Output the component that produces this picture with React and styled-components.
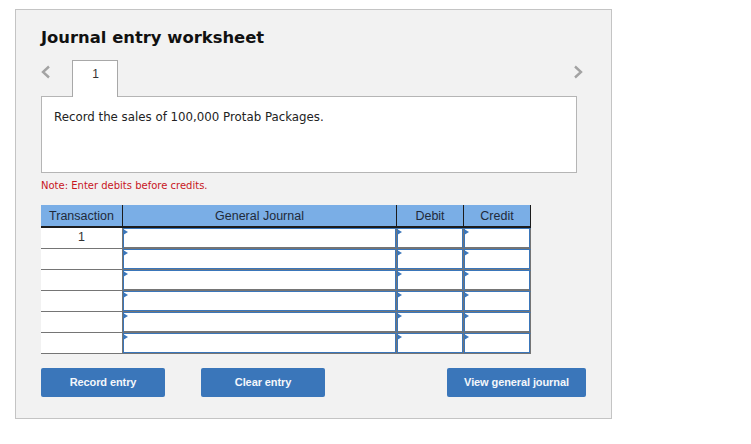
import React from "react";
import styled, { createGlobalStyle } from "styled-components";

const GlobalStyle = createGlobalStyle`
    html, body {
        margin: 0;
        background: #fff;
    }
`;

const Panel = styled.div`
    box-sizing: border-box;
    width: 597px;
    height: 410px;
    margin: 9px 0 0 15px;
    padding: 15px 25px 0 25px;
    background: #f2f2f2;
    border: 1px solid #c4c4c4;
`;

const Title = styled.h1`
    margin: 0;
    height: 26px;
    font-family: "DejaVu Sans", sans-serif;
    font-size: 16.4px;
    line-height: 25px;
    font-weight: 700;
    color: #111;
`;

const Nav = styled.div`
    display: flex;
    align-items: flex-start;
    width: 536px;
    height: 36px;
    margin-top: 9px;
`;

const Arrow = styled.button`
    width: 16px;
    height: 24px;
    margin: ${(p) => (p.$right ? "0 -9px 0 auto" : "0 18px 0 -3px")};
    padding: 0;
    border: 0;
    background: none;
    display: flex;
    align-items: center;
    justify-content: center;
    color: #a3a3a3;
`;

const Tab = styled.div`
    box-sizing: border-box;
    width: 46px;
    height: 37px;
    padding: 6px 0 0 1px;
    position: relative;
    z-index: 1;
    background: #fff;
    border: 1px solid #a8a8a8;
    border-bottom: 0;
    text-align: center;
    font-family: "Liberation Sans", sans-serif;
    font-size: 12px;
    line-height: 15px;
    color: #333;
`;

const Prompt = styled.div`
    box-sizing: border-box;
    width: 536px;
    height: 77px;
    padding: 13px 12px;
    background: #fff;
    border: 1px solid #b5b5b5;
    font-family: "DejaVu Sans", sans-serif;
    font-size: 11.8px;
    line-height: 15px;
    color: #222;
`;

const Note = styled.p`
    margin: 6px 0 0 0;
    height: 14px;
    font-family: "DejaVu Sans", sans-serif;
    font-size: 10px;
    line-height: 14px;
    color: #c8161d;
`;

const Grid = styled.div`
    display: grid;
    grid-template-columns: 82px 274px 67px 67px;
    width: 490px;
    margin-top: 12px;
    font-family: "Liberation Sans", sans-serif;
    font-size: 12.5px;
`;

const HeadCell = styled.div`
    box-sizing: border-box;
    height: 23px;
    background: #7aaee6;
    border-bottom: 2px solid #1c1c1c;
    border-right: 1px solid #1c1c1c;
    display: flex;
    align-items: center;
    justify-content: center;
    color: #1f2a3a;
`;

const TransCell = styled.div`
    box-sizing: border-box;
    height: 21px;
    background: #fff;
    border-bottom: 1px solid #757575;
    border-right: 1px solid #757575;
    text-align: center;
    line-height: 19px;
    color: #333;
`;

const EntryCell = styled.div`
    box-sizing: border-box;
    height: 21px;
    position: relative;
    background: #fff;
    border-top: 1px solid #3a76ba;
    border-left: 1px solid #3a76ba;
    border-right: 1px solid #757575;
    border-bottom: 1px solid #757575;
    box-shadow: inset -1px 0 0 #3a76ba, inset 0 -1px 0 ${(p) => p.$line};

    &::before {
        content: "";
        position: absolute;
        left: -1px;
        top: 0;
        border-left: 5px solid #3a76ba;
        border-top: 3.5px solid transparent;
        border-bottom: 3.5px solid transparent;
    }
`;

const Actions = styled.div`
    display: flex;
    gap: 36px;
    width: 545px;
    margin-top: 14px;
`;

const Action = styled.button`
    box-sizing: border-box;
    width: ${(p) => (p.$wide ? "139px" : "124px")};
    height: 29px;
    margin-left: ${(p) => (p.$wide ? "auto" : "0")};
    padding: 0 0 2px 0;
    background: #3a76ba;
    border: 0;
    border-radius: 2px;
    font-family: "Liberation Sans", sans-serif;
    font-size: 11px;
    font-weight: 700;
    letter-spacing: -0.1px;
    color: #f4f7fb;
`;

const Chevron = ({ right }) => (
    <svg width="10" height="14" viewBox="0 0 10 14" fill="none">
        <path
            d={right ? "M2 1.5 L8 7 L2 12.5" : "M8 1.5 L2 7 L8 12.5"}
            stroke="currentColor"
            strokeWidth="2.4"
        />
    </svg>
);

const rows = [0, 1, 2, 3, 4, 5];

export default function App() {
    return (
        <>
            <GlobalStyle />
            <Panel>
                <Title>Journal entry worksheet</Title>
                <Nav>
                    <Arrow aria-label="Previous">
                        <Chevron />
                    </Arrow>
                    <Tab>1</Tab>
                    <Arrow $right aria-label="Next">
                        <Chevron right />
                    </Arrow>
                </Nav>
                <Prompt>Record the sales of 100,000 Protab Packages.</Prompt>
                <Note>Note: Enter debits before credits.</Note>
                <Grid>
                    <HeadCell>Transaction</HeadCell>
                    <HeadCell>General Journal</HeadCell>
                    <HeadCell>Debit</HeadCell>
                    <HeadCell>Credit</HeadCell>
                    {rows.map((r) => {
                        // the rule under each row alternates grey and blue
                        const line = r % 2 === 0 ? "#757575" : "#3a76ba";
                        return (
                            <React.Fragment key={r}>
                                <TransCell>{r === 0 ? "1" : ""}</TransCell>
                                <EntryCell $line={line} />
                                <EntryCell $line={line} />
                                <EntryCell $line={line} />
                            </React.Fragment>
                        );
                    })}
                </Grid>
                <Actions>
                    <Action>Record entry</Action>
                    <Action>Clear entry</Action>
                    <Action $wide>View general journal</Action>
                </Actions>
            </Panel>
        </>
    );
}
